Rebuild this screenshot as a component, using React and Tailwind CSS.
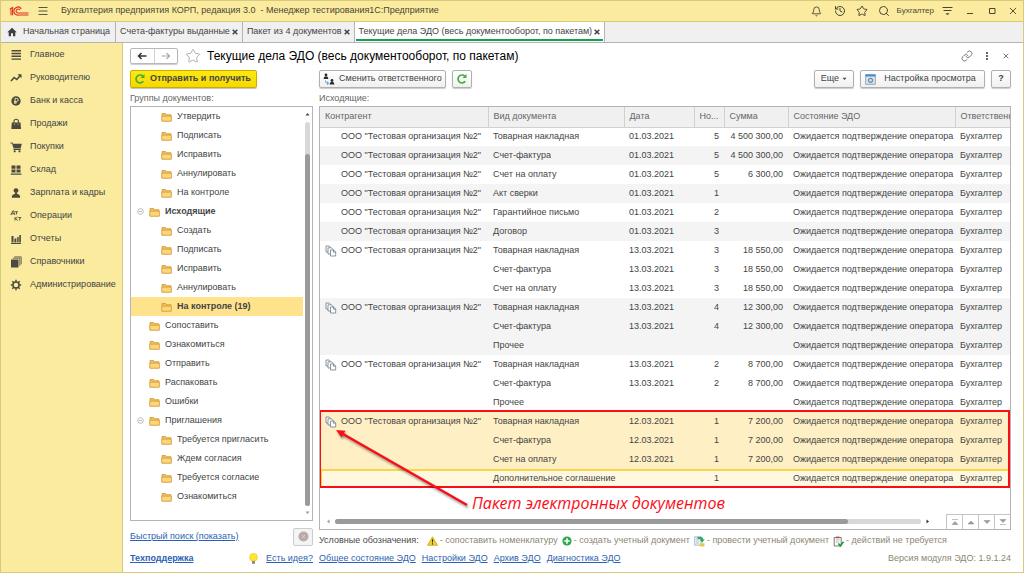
import React, { useState } from 'react';
import { Bell, History, Link, Search, Star } from 'lucide-react';

const sections = [
  { name: 'Главное', icon: 'menu' },
  { name: 'Руководителю', icon: 'trend' },
  { name: 'Банк и касса', icon: 'ruble' },
  { name: 'Продажи', icon: 'bag' },
  { name: 'Покупки', icon: 'cart' },
  { name: 'Склад', icon: 'store' },
  { name: 'Зарплата и кадры', icon: 'person' },
  { name: 'Операции', icon: 'dtkt' },
  { name: 'Отчеты', icon: 'bars' },
  { name: 'Справочники', icon: 'books' },
  { name: 'Администрирование', icon: 'gear' },
];

const folders = [
  { name: 'Утвердить', level: 2 },
  { name: 'Подписать', level: 2 },
  { name: 'Исправить', level: 2 },
  { name: 'Аннулировать', level: 2 },
  { name: 'На контроле', level: 2 },
  { name: 'Исходящие', level: 1, open: true, bold: true },
  { name: 'Создать', level: 2 },
  { name: 'Подписать', level: 2 },
  { name: 'Исправить', level: 2 },
  { name: 'Аннулировать', level: 2 },
  { name: 'На контроле (19)', level: 2, bold: true },
  { name: 'Сопоставить', level: 1 },
  { name: 'Ознакомиться', level: 1 },
  { name: 'Отправить', level: 1 },
  { name: 'Распаковать', level: 1 },
  { name: 'Ошибки', level: 1 },
  { name: 'Приглашения', level: 1, open: true },
  { name: 'Требуется пригласить', level: 2 },
  { name: 'Ждем согласия', level: 2 },
  { name: 'Требуется согласие', level: 2 },
  { name: 'Ознакомиться', level: 2 },
];

const org = 'ООО "Тестовая организация №2"';
const state = 'Ожидается подтверждение оператора';

// one package = one group of rows: [document, date, number, sum]
const packages = [
  [['Товарная накладная', '01.03.2021', 5, '4 500 300,00']],
  [['Счет-фактура', '01.03.2021', 5, '4 500 300,00']],
  [['Счет на оплату', '01.03.2021', 5, '6 300,00']],
  [['Акт сверки', '01.03.2021', 1, '']],
  [['Гарантийное письмо', '01.03.2021', 2, '']],
  [['Договор', '01.03.2021', 3, '']],
  [
    ['Товарная накладная', '13.03.2021', 3, '18 550,00'],
    ['Счет-фактура', '13.03.2021', 3, '18 550,00'],
    ['Счет на оплату', '13.03.2021', 3, '18 550,00'],
  ],
  [
    ['Товарная накладная', '13.03.2021', 4, '12 300,00'],
    ['Счет-фактура', '13.03.2021', 4, '12 300,00'],
    ['Прочее', '', '', ''],
  ],
  [
    ['Товарная накладная', '13.03.2021', 2, '8 700,00'],
    ['Счет-фактура', '13.03.2021', 2, '8 700,00'],
    ['Прочее', '', '', ''],
  ],
  [
    ['Товарная накладная', '12.03.2021', 1, '7 200,00'],
    ['Счет-фактура', '12.03.2021', 1, '7 200,00'],
    ['Счет на оплату', '12.03.2021', 1, '7 200,00'],
    ['Дополнительное соглашение', '', 1, ''],
  ],
];

const SectionIcon = ({ name }) => (
  <svg viewBox="0 0 12 12" className="h-3 w-3 shrink-0" fill="#4b4940" stroke="none">
    {name === 'menu' && <path d="M1.5 1h9.5v1.5H1.5zM1.5 3.8h9.5v1.5H1.5zM1.5 6.6h9.5v1.5H1.5zM1.5 9.4h9.5v1.4H1.5z" />}
    {name === 'trend' && (
      <>
        <path d="M1 9l3.2-3.5 2.5 2 3.3-3.5" fill="none" stroke="#4b4940" strokeWidth="1.6" />
        <path d="M7.5 2.3h4v4z" />
      </>
    )}
    {name === 'ruble' && (
      <>
        <circle cx="6" cy="6" r="4.7" />
        <path d="M5 9V3.4h1.7a1.5 1.5 0 0 1 0 3H4M4 7.8h3" fill="none" stroke="#faeb9e" strokeWidth="0.9" />
      </>
    )}
    {name === 'bag' && (
      <>
        <path d="M1.8 4.5h8.7l.5 6.500H1.300z" />
        <path d="M4 6V3.2a2.200 2 0 0 1 4.400 0V6" fill="none" stroke="#4b4940" strokeWidth="1.1" />
        <circle cx="4.5" cy="6" r=".5" fill="#faeb9e" />
        <circle cx="8" cy="6" r=".5" fill="#faeb9e" />
      </>
    )}
    {name === 'cart' && (
      <>
        <path d="M.5 1.5h2l.5 1.300h8.800l-1.200 4.600H3.600L2 2.600H.5z" />
        <path d="M3.5 8h7.300v1H3.500z" />
        <circle cx="4.7" cy="10.300" r="1.1" />
        <circle cx="9.5" cy="10.300" r="1.1" />
      </>
    )}
    {name === 'store' && <path d="M1.5 1.500h4v3.300h-4zM6.500 1.500h4v3.300h-4zM1.500 5.600h4v3h-4zM6.500 5.600h4v3h-4zM.8 9.400h10.600v1.300H.8z" />}
    {name === 'person' && (
      <>
        <circle cx="6" cy="3.600" r="2.400" />
        <path d="M1.800 10.800c0-3 1.700-3.600 3.200-3.800V5.500h2V7c1.500.2 3.200.8 3.200 3.800z" />
      </>
    )}
    {name === 'dtkt' && (
      <path
        d="M1 5V3.800h3.700V5M1.800 3.800L2.600 1h1.400v2.800M5 1.800h3M6.500 1.800v2.600M5 7v3.500M7.600 7L5.300 8.700l2.400 1.800M8.300 7.600h3M9.800 7.600v2.900"
        fill="none"
        stroke="#4b4940"
        strokeWidth="0.9"
      />
    )}
    {name === 'bars' && <path d="M1.5 3h2v6.500h-2zM4.400 5.500h2v4h-2zM7.200 4h1.500v5.500H7.200zM9.300 2h1.600v7.500H9.300zM1 10h10v1H1z" />}
    {name === 'books' && (
      <>
        <path d="M1 3.500h7.500v8H1z" />
        <path d="M2.800 2.200h7v7.500M4.200.9h7v7.500" fill="none" stroke="#4b4940" strokeWidth="0.8" />
      </>
    )}
    {name === 'gear' && (
      <>
        <circle cx="6" cy="6" r="3" fill="none" stroke="#4b4940" strokeWidth="1.5" />
        <path d="M6 .8v2M6 9.200v2M.8 6h2M9.200 6h2M2.300 2.300l1.400 1.400M8.300 8.300l1.400 1.400M2.300 9.700l1.400-1.400M8.300 3.700l1.400-1.400" fill="none" stroke="#4b4940" strokeWidth="1.5" />
      </>
    )}
  </svg>
);

const Folder = () => (
  <svg viewBox="0 0 11 10" className="h-[10px] w-[11px] shrink-0">
    <path d="M1 9V1.500h3.500l1 1.200h4.500V9z" fill="#f0bf55" stroke="#c98f35" strokeWidth="0.7" />
    <path d="M.8 4.200h9.600v5H.8z" fill="#fbd777" stroke="#d39a3c" strokeWidth="0.7" />
  </svg>
);

const Package = () => (
  <svg viewBox="0 0 12 12" className="h-3 w-3 shrink-0" fill="#fff" stroke="#6d7c88" strokeWidth="0.8">
    <path d="M1 7V1h3.200L5.700 2.500V7z" />
    <path d="M3 9V2.800h3.500L8 4.300V9z" />
    <path d="M5.500 11V5h3.200l2 2v4z" />
    <path d="M8.500 5v2.200h2.200" fill="none" />
  </svg>
);

const Refresh = () => (
  <svg viewBox="0 0 12 12" className="h-3 w-3 shrink-0" fill="none" stroke="#3fae3a" strokeWidth="1.7">
    <path d="M9.300 8.300A4 4 0 1 1 8.700 3" />
    <path d="M10.500 1v4h-4z" fill="#3fae3a" stroke="none" />
  </svg>
);

const Cross = ({ className }) => (
  <svg viewBox="0 0 6 6" className={className} fill="none" stroke="currentColor">
    <path d="M.7.7l4.600 4.600M5.300.7L.7 5.300" />
  </svg>
);

const Titlebar = () => (
  <header className="flex h-[21px] items-center border-b border-[#d8ca7c] bg-[#faeb9e] pl-2 pr-[2px] text-[#4a4636]">
    <svg viewBox="0 0 20 10" className="h-[10px] w-5" fill="none" stroke="#e0301f">
      <path d="M.8 3.300L3.600 1.500V9.300M2 3.500v5.800" strokeWidth="1.1" />
      <path d="M12.300 3A4 4 0 1 0 9.500 9h10" strokeWidth="1.1" />
      <path d="M10.800 4A2 2 0 1 0 9.500 7h10" strokeWidth="1.1" />
    </svg>
    <button aria-label="Меню" className="ml-2 flex h-4 w-3 items-center">
      <svg viewBox="0 0 12 10" className="h-[10px] w-3" stroke="#5c5745">
        <path d="M1.500 1.500h9M1.500 5h9M1.500 8.500h9" />
      </svg>
    </button>
    <h1 className="ml-3 whitespace-pre">
      Бухгалтерия предприятия КОРП, редакция 3.0  - Менеджер тестирования1С:Предприятие
    </h1>
    <div className="ml-auto flex items-center">
      <button aria-label="Уведомления" className="w-[23px]"><Bell size={11} strokeWidth={2} /></button>
      <button aria-label="История" className="w-[22px]"><History size={12} strokeWidth={2} /></button>
      <button aria-label="Избранное" className="w-[22px]"><Star size={12} strokeWidth={2} /></button>
      <button aria-label="Поиск" className="w-[19px]"><Search size={12} strokeWidth={2} /></button>
      <span className="text-[8px]">Бухгалтер</span>
      <button aria-label="Настройки" className="ml-2 w-6">
        <svg viewBox="0 0 11 10" className="h-[10px] w-[11px]" stroke="#4a4636" fill="#4a4636">
          <path d="M.5 1.500h10M1.500 4.500h8" />
          <path d="M4 7.500h3L5.500 9z" strokeWidth="0.5" />
        </svg>
      </button>
      <button aria-label="Свернуть" className="w-[22px]">
        <svg viewBox="0 0 8 8" className="h-2 w-2" stroke="#4a4636"><path d="M1 6.500h6" /></svg>
      </button>
      <button aria-label="Развернуть" className="w-[21px]">
        <svg viewBox="0 0 8 8" className="h-2 w-2" fill="none" stroke="#4a4636"><path d="M1.500 1.500h5.500v5H1.500z" /></svg>
      </button>
      <button aria-label="Закрыть" className="w-3"><Cross className="h-2 w-2 stroke-[0.7]" /></button>
    </div>
  </header>
);

const tabs = ['Счета-фактуры выданные', 'Пакет из 4 документов', 'Текущие дела ЭДО (весь документооборот, по пакетам)'];

const Tabs = () => (
  <nav className="flex h-[21px] border-b border-[#b4b4b4] bg-[#f0f0f0]">
    <button className="flex items-center gap-[6px] border-r border-[#b4b4b4] pl-[6px] pr-[5px]">
      <svg viewBox="0 0 10 10" className="h-[10px] w-[10px]" fill="#3f3f3f">
        <path d="M5 .8L.3 5.300h1.400v4H4v-3h2v3h2.300v-4h1.400z" />
      </svg>
      Начальная страница
    </button>
    {tabs.map((tab, i) => (
      <div key={tab} className={i === 2 ? 'flex border-r border-[#b4b4b4] bg-white px-px' : 'flex border-r border-[#b4b4b4] px-px'}>
        <div className={i === 2 ? 'mb-px flex items-center gap-[2px] border-b-2 border-[#14a04f] px-[3px] pt-[3px]' : 'flex items-center gap-[2px] px-[3px]'}>
          <button>{tab}</button>
          <button aria-label="Закрыть вкладку"><Cross className="h-[6px] w-[6px] stroke-[1.5]" /></button>
        </div>
      </div>
    ))}
  </nav>
);

const Sidebar = () => (
  <nav className="w-[122px] shrink-0 border-r border-[#d8ca7c] bg-[#faeb9e]">
    {sections.map((s) => (
      <a key={s.name} href="#" className="flex h-[23px] items-center gap-2 whitespace-nowrap pl-[9px]">
        <SectionIcon name={s.icon} />
        {s.name}
      </a>
    ))}
  </nav>
);

const btn = 'flex h-[18px] items-center whitespace-nowrap rounded-xs border border-[#b0b0b0] bg-linear-to-b from-white to-[#f0f0f0] shadow-[0_1px_1px_rgba(0,0,0,0.2)]';

const Tree = () => {
  const [selected, setSelected] = useState(10);

  return (
    <div className="flex flex-1 border border-[#b4b4b4] bg-white">
      <ul className="flex-1">
        {folders.map((f, i) => (
          <li key={i} className={i === selected ? 'bg-[#fee38c]' : ''}>
            <button
              onClick={() => setSelected(i)}
              className={`flex h-[19px] w-full items-center gap-[5px] whitespace-nowrap ${f.level === 2 ? 'pl-[30px]' : 'pl-[6px]'} ${f.bold ? 'font-bold' : ''}`}
            >
              {f.level === 1 && (
                <svg viewBox="0 0 7 7" className="h-[7px] w-[7px] shrink-0" fill="none" stroke="#a8a8a8" strokeWidth="0.8">
                  {f.open && <><circle cx="3.5" cy="3.5" r="2.800" /><path d="M2 3.500h3" /></>}
                </svg>
              )}
              <Folder />
              {f.name}
            </button>
          </li>
        ))}
      </ul>
      <div className="flex w-[9px] flex-col items-center py-[5px]">
        <svg viewBox="0 0 5 4" className="h-1 w-[5px]" fill="#444"><path d="M.5 3.500h4L2.500 1z" /></svg>
        <div className="mt-[6px] w-[5px] flex-1 rounded-full bg-[#d8d8d8] pt-8">
          <div className="h-full rounded-full bg-[#9a9a9a]" />
        </div>
        <svg viewBox="0 0 5 4" className="mt-[5px] h-1 w-[5px]" fill="#999"><path d="M.5.5h4L2.500 3z" /></svg>
      </div>
    </div>
  );
};

const headers = ['Контрагент', 'Вид документа', 'Дата', 'Но...', 'Сумма', 'Состояние ЭДО', 'Ответственн'];

const rowColor = (pack, i, last) => {
  if (pack === packages.length - 1) {
    return i === last ? 'bg-[#fff8e1] shadow-[inset_2px_2px_0_#fad54a]' : 'bg-[#feefc4]';
  }
  return pack % 2 ? 'bg-[#f4f4f4]' : 'bg-white';
};

const Documents = () => (
  <div className="relative flex flex-1 flex-col overflow-hidden border border-[#b4b4b4] bg-white">
    <table className="w-full table-fixed border-collapse whitespace-nowrap text-left">
      <colgroup>
        <col className="w-[168px]" />
        <col className="w-[136px]" />
        <col className="w-[70px]" />
        <col className="w-[30px]" />
        <col className="w-[64px]" />
        <col className="w-[167px]" />
        <col />
      </colgroup>
      <thead>
        <tr className="h-5 bg-[#f0f0f0] text-[#666]">
          {headers.map((h) => (
            <th key={h} className="border-b border-r border-[#d0d0d0] px-[5px] font-normal last:border-r-0 last:pr-0">{h}</th>
          ))}
        </tr>
      </thead>
      <tbody>
        {packages.map((docs, p) =>
          docs.map(([doc, date, num, sum], i) => (
            <tr key={`${p}-${i}`} className={`h-[19px] ${rowColor(p, i, docs.length - 1)}`}>
              <td className="pl-[5px]">
                {i === 0 && (
                  <div className="flex items-center gap-1">
                    {docs.length > 1 ? <Package /> : <span className="w-3" />}
                    {org}
                  </div>
                )}
              </td>
              <td className="px-[5px]">{doc}</td>
              <td className="px-[5px]">{date}</td>
              <td className="px-[5px] text-right">{num}</td>
              <td className="px-[5px] text-right">{sum}</td>
              <td className="px-[5px]">{state}</td>
              <td className="pl-[5px]">Бухгалтер</td>
            </tr>
          ))
        )}
      </tbody>
    </table>

    {/* package callout */}
    <div className="pointer-events-none absolute -left-px right-0 top-[303px] h-[78px] border-2 border-[#fb0d18]" />
    <svg viewBox="0 0 140 86" className="pointer-events-none absolute left-[14px] top-[321px] h-[86px] w-[140px] drop-shadow-[1px_2px_1px_rgba(0,0,0,0.4)]">
      <path d="M133 77L9 6" stroke="#fb0d18" strokeWidth="2.5" />
      <path d="M2 2l9.500.8-4 6.800z" fill="#fb0d18" />
    </svg>
    <p className="pointer-events-none absolute left-[152px] top-[384px] font-['Open_Sans',sans-serif] text-[16px] italic leading-6 text-[#fb0d18]">
      Пакет электронных документов
    </p>

    <div className="mt-auto flex h-[15px] items-end">
      <div className="flex flex-1 items-center self-center pl-[6px] pr-4">
        <svg viewBox="0 0 4 5" className="h-[5px] w-1" fill="#999"><path d="M3.500.5v4L1 2.500z" /></svg>
        <div className="mx-[5px] h-[5px] flex-1 rounded-full bg-[#d8d8d8]">
          <div className="h-full w-7/8 rounded-full bg-[#9a9a9a]" />
        </div>
        <svg viewBox="0 0 4 5" className="h-[5px] w-1" fill="#333"><path d="M.5.5v4L3 2.500z" /></svg>
      </div>
      <div className="flex h-[15px] border-t border-[#c4c4c4]">
        {['M1 1.500h6M1 6.500h6L4 3.500z', 'M1 6h6L4 3z', 'M1 2.500h6L4 5.500z', 'M1 6.500h6M1 1.500h6L4 4.500z'].map((d, i) => (
          <button key={d} aria-label={['В начало', 'Вверх', 'Вниз', 'В конец'][i]} className="flex w-4 items-center justify-center border-l border-[#c4c4c4]">
            <svg viewBox="0 0 8 8" className="h-2 w-2" fill="#999" stroke="#999" strokeWidth="0.6"><path d={d} /></svg>
          </button>
        ))}
      </div>
    </div>
  </div>
);

const Legend = () => (
  <div className="flex h-[22px] items-center gap-1 whitespace-nowrap text-[#8c8672]">
    <span className="mr-1 text-[#4a4a4a]">Условные обозначения:</span>
    <span className="flex items-center gap-[2px]">
      <svg viewBox="0 0 11 10" className="h-[10px] w-[11px]">
        <path d="M5.500.8l5 8.500H.5z" fill="#f6cf2c" stroke="#c29a10" strokeWidth="0.7" strokeLinejoin="round" />
        <path d="M5.500 3.300v3.200M5.500 7.300v1.100" stroke="#3a3000" strokeWidth="1.1" />
      </svg>
      - сопоставить номенклатуру
    </span>
    <span className="flex items-center gap-[2px]">
      <svg viewBox="0 0 10 10" className="h-[10px] w-[10px]">
        <circle cx="5" cy="5" r="4.600" fill="#2fa84a" />
        <path d="M5 2.300v5.400M2.300 5h5.400" stroke="#fff" strokeWidth="1.6" />
      </svg>
      - создать учетный документ
    </span>
    <span className="flex items-center gap-[2px]">
      <svg viewBox="0 0 11 11" className="h-[11px] w-[11px]">
        <path d="M.7.7h6.500v8.500H.7z" fill="#eef3f8" stroke="#8fa5b8" strokeWidth="0.7" />
        <path d="M2 3h3M2 5h3M2 7h3" stroke="#9fb3c4" strokeWidth="0.7" />
        <path d="M3.500 1h3.500q2.400 0 2.400 2.500h1.400L8.200 6.500 5.400 3.500H7Q7 3 6 3H3.500z" fill="#2fa860" />
        <path d="M6 7.300h4.500v3.200H6z" fill="#e8c84a" />
      </svg>
      - провести учетный документ
    </span>
    <span className="flex items-center gap-[2px]">
      <svg viewBox="0 0 11 11" className="h-[11px] w-[11px]">
        <path d="M1.200 1.500h7V10h-7z" fill="#fff" stroke="#6b6b6b" strokeWidth="0.9" />
        <path d="M3 .6h3.500v1.700H3z" fill="#a05a4a" />
        <path d="M2.700 4h4M2.700 6h3" stroke="#9a9a9a" strokeWidth="0.7" />
        <path d="M5.300 7.500l2 2.300 3.200-4" fill="none" stroke="#239a35" strokeWidth="1.6" />
      </svg>
      - действий не требуется
    </span>
  </div>
);

const App = () => (
  <div className="flex min-h-screen flex-col overflow-hidden border border-[#d8ca7c] bg-white font-['Liberation_Sans',Arial,sans-serif] text-[9px] text-[#444]">
    <Titlebar />
    <Tabs />
    <div className="flex flex-1">
      <Sidebar />
      <main className="flex min-w-0 flex-1 flex-col pl-[7px] pr-3">
        <div className="flex h-[25px] items-center">
          <div className="flex h-4 w-12 rounded-xs border border-[#b8b8b8] shadow-[0_1px_1px_rgba(0,0,0,0.2)]">
            <button aria-label="Назад" className="flex flex-1 items-center justify-center border-r border-[#d0d0d0]">
              <svg viewBox="0 0 10 8" className="h-2 w-[10px]" fill="none" stroke="#333" strokeWidth="1.5"><path d="M9.500 4h-8M4.500 1l-3 3 3 3" /></svg>
            </button>
            <button aria-label="Вперед" className="flex flex-1 items-center justify-center">
              <svg viewBox="0 0 10 8" className="h-2 w-[10px]" fill="none" stroke="#aaa" strokeWidth="1.2"><path d="M.5 4h8M5.500 1l3 3-3 3" /></svg>
            </button>
          </div>
          <button aria-label="В избранное" className="ml-[7px]"><Star size={16} strokeWidth={1.5} color="#b0b0b0" /></button>
          <h2 className="ml-[6px] whitespace-nowrap text-[12px] text-black">Текущие дела ЭДО (весь документооборот, по пакетам)</h2>
          <div className="ml-auto flex items-center gap-3 text-[#555]">
            <button aria-label="Ссылка"><Link size={12} strokeWidth={1.5} /></button>
            <button aria-label="Еще">
              <svg viewBox="0 0 4 8" className="h-2 w-1" fill="#666"><path d="M1 0h2v2H1zM1 3h2v2H1zM1 6h2v2H1z" /></svg>
            </button>
            <button aria-label="Закрыть форму" className="mx-[2px]"><Cross className="h-[6px] w-[6px] stroke-[0.8]" /></button>
          </div>
        </div>

        <div className="flex flex-1 gap-[6px]">
          <div className="flex w-[183px] shrink-0 flex-col">
            <button className="mt-[2px] flex h-[18px] items-center gap-1 self-start whitespace-nowrap rounded-xs border border-[#c9ae00] bg-linear-to-b from-[#ffe812] to-[#f5d800] pl-[3px] pr-[5px] font-bold shadow-[0_1px_1px_rgba(0,0,0,0.25)]">
              <Refresh />
              Отправить и получить
            </button>
            <p className="h-[18px] pt-1 text-[#666]">Группы документов:</p>
            <Tree />
            <div className="flex h-[31px] items-center justify-between">
              <a href="#" className="text-[#2b62b5] underline">Быстрый поиск (показать)</a>
              <button aria-label="Остановить" className="flex h-[18px] w-5 items-center justify-center rounded-xs border border-[#ccc] bg-[#f4f4f4]">
                <svg viewBox="0 0 11 11" className="h-[11px] w-[11px]"><circle cx="5.5" cy="5.5" r="5" fill="#b8aaa8" /><path d="M4 4l3 3M7 4L4 7" stroke="#d8d0ce" /></svg>
              </button>
            </div>
          </div>

          <div className="flex min-w-0 flex-1 flex-col">
            <div className="mt-[2px] flex items-center gap-[6px]">
              <button className={`${btn} gap-1 px-[3px]`}>
                <svg viewBox="0 0 12 12" className="h-3 w-3" fill="#2b2b2b">
                  <circle cx="3" cy="2" r="1.400" />
                  <path d="M.7 6c0-1.800.8-2.400 2.300-2.400S5.300 4.200 5.300 6zM6.700 11.500c0-1.800.8-2.400 2.300-2.400s2.300.6 2.300 2.400z" />
                  <circle cx="9" cy="7.5" r="1.400" />
                  <path d="M2.500 7.500c0 2 .7 2.700 2.700 2.700M4 8.700l1.600 1.500L4 11.700" fill="none" stroke="#3b9ad8" />
                </svg>
                Сменить ответственного
              </button>
              <button aria-label="Обновить" className={`${btn} w-5 justify-center`}><Refresh /></button>
              <button className={`${btn} ml-auto gap-[3px] px-[6px]`}>
                Еще
                <svg viewBox="0 0 5 4" className="h-1 w-[5px]" fill="#444"><path d="M.5.8h4L2.500 3z" /></svg>
              </button>
              <button className={`${btn} w-[125px] pl-1`}>
                <svg viewBox="0 0 11 11" className="h-[11px] w-[11px]">
                  <path d="M.7.7h9.600v9.600H.7z" fill="#dce6ee" stroke="#7d95a8" strokeWidth="0.8" />
                  <path d="M.5.5h10v2H.5z" fill="#3f8fd0" />
                  <circle cx="5.5" cy="6.300" r="2" fill="none" stroke="#70869a" strokeWidth="1.2" />
                </svg>
                <span className="flex-1 text-center">Настройка просмотра</span>
              </button>
              <button className={`${btn} w-5 justify-center font-bold`}>?</button>
            </div>
            <p className="h-[18px] pt-1 text-[#666]">Исходящие:</p>
            <Documents />
            <Legend />
          </div>
        </div>

        <footer className="mb-[6px] flex h-[14px] items-center whitespace-nowrap text-[#2b62b5]">
          <div className="mr-[6px] flex w-[183px] items-center">
            <a href="#" className="font-bold underline">Техподдержка</a>
            <svg viewBox="0 0 9 12" className="ml-auto mr-2 h-3 w-[9px]">
              <circle cx="4.5" cy="4.300" r="3.900" fill="#ffe53a" stroke="#dcb800" strokeWidth="0.5" />
              <path d="M3 8h3v2.800H3z" fill="#8a8a8a" />
            </svg>
            <a href="#" className="underline">Есть идея?</a>
          </div>
          <div className="flex gap-[6px]">
            <a href="#" className="underline">Общее состояние ЭДО</a>
            <a href="#" className="underline">Настройки ЭДО</a>
            <a href="#" className="underline">Архив ЭДО</a>
            <a href="#" className="underline">Диагностика ЭДО</a>
          </div>
          <span className="ml-auto text-[#8c8672]">Версия модуля ЭДО: 1.9.1.24</span>
        </footer>
      </main>
    </div>
  </div>
);

export default App;
